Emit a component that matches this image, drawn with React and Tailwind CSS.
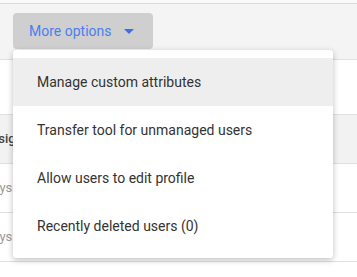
import React from "react";

export default function App() {
  const items = [
    "Manage custom attributes",
    "Transfer tool for unmanaged users",
    "Allow users to edit profile",
    "Recently deleted users (0)",
  ];
  return (
    <div
      className="relative w-[357px] h-[277px] overflow-hidden bg-white"
      style={{ fontFamily: "Roboto, 'Liberation Sans', sans-serif" }}
    >
      <div className="h-[3px] bg-[#fafafa]" />
      <div className="h-[57px] bg-[#f4f4f4] border-t border-b border-t-[#dadada] border-b-[#e0e0e0] px-[13px] pt-[9px]">
        <button className="h-[36px] w-[140px] rounded-[4px] bg-[#cfcfcf] flex items-center pl-[16px] text-[14px] text-[#4a7ef0]">
          <span>More options</span>
          <svg className="ml-[12px]" width="10" height="5" viewBox="0 0 10 5">
            <path d="M0 0 L10 0 L5 5 Z" fill="#3b6fe8" />
          </svg>
        </button>
      </div>
      <div className="h-[55px] border-b border-[#e0e0e0]" />
      <div className="h-[49px] bg-[#f2f2f2] border-b border-[#e0e0e0] flex items-center text-[13px] font-medium text-[#444]">
        <span className="-ml-[17px]">Assigned</span>
      </div>
      <div className="h-[49px] border-b border-[#e0e0e0] flex items-center text-[13px] text-[#9a9a9a]">
        <span className="-ml-[29px]">Always active</span>
      </div>
      <div className="h-[49px] border-b border-[#e0e0e0] flex items-center text-[13px] text-[#9a9a9a]">
        <span className="-ml-[29px]">Always active</span>
      </div>

      <div className="absolute left-[13px] top-[50px] w-[320px] bg-white rounded-[3px] py-[8px] shadow-[0_2px_6px_rgba(0,0,0,0.25)]">
        {items.map((t, i) => (
          <div
            key={t}
            className={
              "h-[48px] flex items-center pl-[24px] text-[14px] text-[#333] " +
              (i === 0 ? "bg-[#eeeeee]" : "")
            }
          >
            {t}
          </div>
        ))}
      </div>
    </div>
  );
}
